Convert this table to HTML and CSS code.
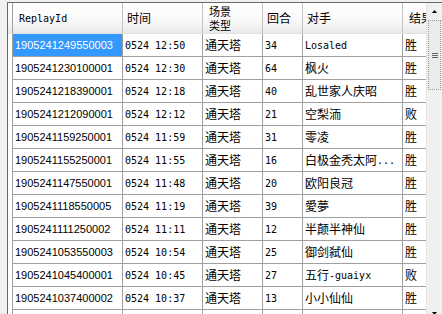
FILE: index.html
```html
<!DOCTYPE html>
<html>
<head>
<meta charset="utf-8">
<link rel="stylesheet" href="styles.css">
</head>
<body>
<div class="frame">
  <div class="rowhead"><div class="rh-top"></div></div>
  <div class="gridarea">
    <div class="row head">
      <div class="c c1 h hp6"><span class="mono">ReplayId</span></div>
      <div class="c h"><span class="cjk">时间</span></div>
      <div class="c h hp6"><div class="two"><span class="cjk sm">场景</span><span class="cjk sm">类型</span></div></div>
      <div class="c h"><span class="cjk">回合</span></div>
      <div class="c h"><span class="cjk">对手</span></div>
      <div class="c h hp6"><span class="cjk">结果</span></div>
    </div>
    <div class="row">
      <div class="c c1 sel"><span class="id">1905241249550003</span></div>
      <div class="c"><span class="mono">0524 12:50</span></div>
      <div class="c"><span class="cjk">通天塔</span></div>
      <div class="c"><span class="mono">34</span></div>
      <div class="c"><span class="mono">Losaled</span></div>
      <div class="c"><span class="cjk">胜</span></div>
    </div>
    <div class="row">
      <div class="c c1"><span class="id">1905241230100001</span></div>
      <div class="c"><span class="mono">0524 12:30</span></div>
      <div class="c"><span class="cjk">通天塔</span></div>
      <div class="c"><span class="mono">64</span></div>
      <div class="c"><span class="cjk">枫火</span></div>
      <div class="c"><span class="cjk">胜</span></div>
    </div>
    <div class="row">
      <div class="c c1"><span class="id">1905241218390001</span></div>
      <div class="c"><span class="mono">0524 12:18</span></div>
      <div class="c"><span class="cjk">通天塔</span></div>
      <div class="c"><span class="mono">40</span></div>
      <div class="c"><span class="cjk">乱世家人庆昭</span></div>
      <div class="c"><span class="cjk">胜</span></div>
    </div>
    <div class="row">
      <div class="c c1"><span class="id">1905241212090001</span></div>
      <div class="c"><span class="mono">0524 12:12</span></div>
      <div class="c"><span class="cjk">通天塔</span></div>
      <div class="c"><span class="mono">21</span></div>
      <div class="c"><span class="cjk">空梨洏</span></div>
      <div class="c"><span class="cjk">败</span></div>
    </div>
    <div class="row">
      <div class="c c1"><span class="id">1905241159250001</span></div>
      <div class="c"><span class="mono">0524 11:59</span></div>
      <div class="c"><span class="cjk">通天塔</span></div>
      <div class="c"><span class="mono">31</span></div>
      <div class="c"><span class="cjk">零凌</span></div>
      <div class="c"><span class="cjk">胜</span></div>
    </div>
    <div class="row">
      <div class="c c1"><span class="id">1905241155250001</span></div>
      <div class="c"><span class="mono">0524 11:55</span></div>
      <div class="c"><span class="cjk">通天塔</span></div>
      <div class="c"><span class="mono">16</span></div>
      <div class="c"><span class="cjk">白极金秃太阿</span><span class="mono">...</span></div>
      <div class="c"><span class="cjk">胜</span></div>
    </div>
    <div class="row">
      <div class="c c1"><span class="id">1905241147550001</span></div>
      <div class="c"><span class="mono">0524 11:48</span></div>
      <div class="c"><span class="cjk">通天塔</span></div>
      <div class="c"><span class="mono">20</span></div>
      <div class="c"><span class="cjk">欧阳良冠</span></div>
      <div class="c"><span class="cjk">胜</span></div>
    </div>
    <div class="row">
      <div class="c c1"><span class="id">1905241118550005</span></div>
      <div class="c"><span class="mono">0524 11:19</span></div>
      <div class="c"><span class="cjk">通天塔</span></div>
      <div class="c"><span class="mono">39</span></div>
      <div class="c"><span class="cjk">愛夢</span></div>
      <div class="c"><span class="cjk">胜</span></div>
    </div>
    <div class="row">
      <div class="c c1"><span class="id">1905241111250002</span></div>
      <div class="c"><span class="mono">0524 11:11</span></div>
      <div class="c"><span class="cjk">通天塔</span></div>
      <div class="c"><span class="mono">12</span></div>
      <div class="c"><span class="cjk">半颠半神仙</span></div>
      <div class="c"><span class="cjk">胜</span></div>
    </div>
    <div class="row">
      <div class="c c1"><span class="id">1905241053550003</span></div>
      <div class="c"><span class="mono">0524 10:54</span></div>
      <div class="c"><span class="cjk">通天塔</span></div>
      <div class="c"><span class="mono">25</span></div>
      <div class="c"><span class="cjk">御剑弑仙</span></div>
      <div class="c"><span class="cjk">胜</span></div>
    </div>
    <div class="row">
      <div class="c c1"><span class="id">1905241045400001</span></div>
      <div class="c"><span class="mono">0524 10:45</span></div>
      <div class="c"><span class="cjk">通天塔</span></div>
      <div class="c"><span class="mono">27</span></div>
      <div class="c"><span class="cjk">五行</span><span class="mono">-guaiyx</span></div>
      <div class="c"><span class="cjk">败</span></div>
    </div>
    <div class="row">
      <div class="c c1"><span class="id">1905241037400002</span></div>
      <div class="c"><span class="mono">0524 10:37</span></div>
      <div class="c"><span class="cjk">通天塔</span></div>
      <div class="c"><span class="mono">13</span></div>
      <div class="c"><span class="cjk">小小仙仙</span></div>
      <div class="c"><span class="cjk">胜</span></div>
    </div>
    <div class="row">
      <div class="c c1"></div>
      <div class="c"></div>
      <div class="c"></div>
      <div class="c"></div>
      <div class="c"></div>
      <div class="c"></div>
    </div>
  </div>
  <div class="vscroll">
    <div class="arrow"><svg width="5" height="3" viewBox="0 0 5 3"><polygon points="0,3 5,3 2.5,0" fill="#000"/></svg></div>
    <div class="thumb">
      <div class="grip"><i></i><i></i><i></i></div>
    </div>
    <div class="track"></div>
    <div class="arrow down"><svg width="5" height="3" viewBox="0 0 5 3"><polygon points="0,0 5,0 2.5,3" fill="#000"/></svg></div>
  </div>
</div>
</body>
</html>
```
FILE: styles.css
```css
html, body {
  margin: 0;
  padding: 0;
}
body {
  width: 442px;
  height: 314px;
  overflow: hidden;
  background: #f0f0f0;
}
.frame {
  margin: 2px 0 0 7px;
  height: 320px;
  display: flex;
  border-top: 1px solid #696969;
  border-left: 1px solid #696969;
  background: #fff;
}
.rowhead {
  width: 4px;
  flex: none;
  background: #fff;
}
.rh-top {
  height: 31px;
  background: linear-gradient(#ffffff 0%, #fbfbfb 45%, #f1f1f1 80%, #e6e6e6 100%);
}
.gridarea {
  flex: 1;
  overflow: hidden;
  background: #fff;
}
.row {
  display: grid;
  grid-template-columns: 111px 80px 60px 40px 100px 60px;
  height: 23px;
}
.row.head {
  height: 31px;
  background: linear-gradient(#ffffff 0%, #fbfbfb 45%, #f1f1f1 80%, #e6e6e6 100%);
}
.c {
  box-sizing: border-box;
  border-right: 1px solid #a0a0a0;
  border-bottom: 1px solid #a0a0a0;
  display: flex;
  align-items: center;
  padding-left: 2px;
  white-space: nowrap;
  overflow: hidden;
  color: #000;
}
.c1 {
  border-left: 1px solid #a0a0a0;
}
.c.h {
  padding-left: 4px;
  border-bottom: 1px solid #e2e2e2;
  border-right: 1px solid #c4c4c4;
}
.c.h.hp6 {
  padding-left: 6px;
}
.sel {
  background: #3399ff;
  background-clip: padding-box;
  color: #fff;
}
.mono {
  font-family: "DejaVu Sans Mono", monospace;
  font-size: 10px;
}
.id {
  font-family: "Liberation Sans", sans-serif;
  font-size: 11px;
}
.cjk {
  font-family: "Noto Sans CJK SC", sans-serif;
  font-size: 12px;
  line-height: 14px;
}
.two {
  display: flex;
  flex-direction: column;
  gap: 1px;
}
.cjk.sm {
  font-size: 11px;
  line-height: 13px;
  height: 13px;
}
.vscroll {
  width: 15px;
  flex: none;
  background: #f0f0f0;
  border-left: 1px solid #e4e4e4;
  display: flex;
  flex-direction: column;
}
.arrow {
  height: 17px;
  display: flex;
  align-items: center;
  justify-content: center;
  flex: none;
}
.arrow.down {
  height: 17px;
  align-items: flex-start;
  padding-top: 6px;
  box-sizing: border-box;
}
.thumb {
  height: 70px;
  flex: none;
  margin: 0 1px;
  box-sizing: border-box;
  border: 1px dotted #9a9a9a;
  background: #ebebeb;
  display: flex;
  align-items: center;
  justify-content: center;
}
.grip {
  display: flex;
  flex-direction: column;
  gap: 1px;
}
.grip i {
  display: block;
  width: 6px;
  height: 1px;
  background: #666;
}
.track {
  flex: 1;
}
```
